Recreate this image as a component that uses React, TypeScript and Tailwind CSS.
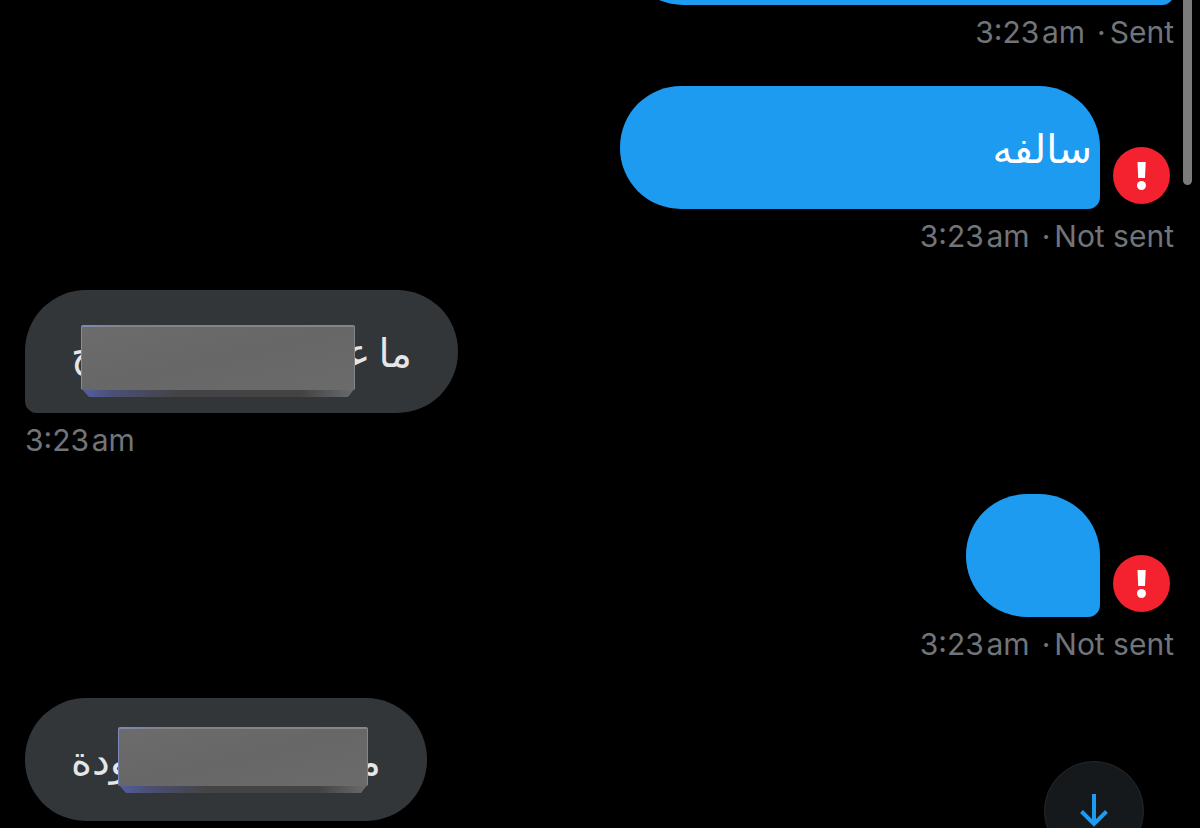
import clsx from "clsx";

type Redaction = { id: string; w: number; h: number; place: string };

type Message = {
  id: number;
  mine: boolean;
  time?: string;
  status?: string;
  failed?: boolean;
  // first and last visible parts of the text, in reading order
  parts: string[];
  size: string;
  redaction?: Redaction;
};

const messages: Message[] = [
  { id: 1, mine: true, time: "3:23", status: "Sent", parts: [], size: "w-[552px]" },
  { id: 2, mine: true, time: "3:23", status: "Not sent", failed: true, parts: ["سالفه"], size: "w-[480px] pr-2" },
  {
    id: 3, mine: false, time: "3:23", parts: ["ما\u2009ع\u200d", "ح"], size: "w-[433px] px-[46px]",
    redaction: { id: "r3", w: 274, h: 72, place: "left-14 top-[35px]" },
  },
  { id: 4, mine: true, time: "3:23", status: "Not sent", failed: true, parts: [], size: "w-[134px]" },
  {
    id: 5, mine: false, parts: ["م\u200d", "ودة"], size: "w-[402px] px-[46px]",
    redaction: { id: "r5", w: 250, h: 66, place: "left-[93px] top-[29px]" },
  },
];

export default function App() {
  return (
    <main className="relative h-screen overflow-hidden bg-black font-['Inter','Liberation_Sans',sans-serif]">
      <ol className="-mt-[118px] flex flex-col gap-9 pl-[25px] pr-[26px]">
        {messages.map((m) => <MessageRow key={m.id} m={m} />)}
      </ol>

      <div className="absolute right-2 top-0 h-[185px] w-[9px] rounded-b-full bg-[#7b7b7b]" />

      <button aria-label="Scroll to latest"
        className="absolute -bottom-[33px] right-14 flex h-[100px] w-[100px] items-center justify-center rounded-full border border-[#25282b] bg-[#16191b]">
        <svg width="30" height="36" viewBox="0 0 30 36" fill="none" stroke="#1d9bf0" strokeWidth="4">
          <path d="M15 1v30M2.500 18.500L15 31l12.500-12.500" />
        </svg>
      </button>
    </main>
  );
}

function MessageRow({ m }: { m: Message }) {
  return (
    <li className={clsx("flex flex-col", m.mine ? "items-end" : "items-start")}>
      <div className="flex items-end gap-[13px]">
        <div dir="rtl"
          className={clsx(
            "relative flex h-[123px] items-center justify-between rounded-[61px] pt-0.5 font-['DejaVu_Sans',sans-serif] text-[40px]",
            m.size,
            m.mine ? "rounded-br-[12px] bg-[#1d9bf0] text-white" : "bg-[#333639] text-[#e4e6e8]",
            !m.mine && m.time && "rounded-bl-[12px]",
          )}>
          {m.parts.map((p) => <span key={p}>{p}</span>)}
          {m.redaction && <Block r={m.redaction} />}
        </div>
        {m.failed && <FailedBadge />}
      </div>
      {m.time && (
        <p className="flex h-[45px] items-center pt-[10px] text-[30px] text-[#717478]">
          <span>{m.time}{"\u200a"}am</span>
          {m.status && <span className="ml-3">·</span>}
          {m.status && <span className="ml-1">{m.status}</span>}
        </p>
      )}
    </li>
  );
}

function FailedBadge() {
  return (
    <button aria-label="Message not sent" className="mb-[5px] mr-1 h-[57px] w-[57px]">
      <svg viewBox="0 0 57 57">
        <circle cx="28.500" cy="28.500" r="28.500" fill="#f4212e" />
        <path d="M24.500 15h8.200l-.7 16h-6.800z" fill="#fff" />
        <circle cx="28.500" cy="38.500" r="4.500" fill="#fff" />
      </svg>
    </button>
  );
}

// grey slab with a bevelled lower edge
function Block({ r: { id, w, h, place } }: { r: Redaction }) {
  const face = h - 7;
  return (
    <svg width={w} height={h} className={clsx("absolute", place)}>
      <defs>
        <linearGradient id={`${id}-face`} x1="0" y1="0" x2="1" y2="1">
          <stop offset="0" stopColor="#6c6c6d" />
          <stop offset=".5" stopColor="#676768" />
          <stop offset="1" stopColor="#6b6b6c" />
        </linearGradient>
        <linearGradient id={`${id}-base`}>
          <stop offset="0" stopColor="#5360a0" />
          <stop offset=".12" stopColor="#4b4f74" />
          <stop offset=".35" stopColor="#444446" />
          <stop offset=".8" stopColor="#434344" />
          <stop offset="1" stopColor="#6a6b6d" />
        </linearGradient>
        <linearGradient id={`${id}-rim`}>
          <stop offset="0" stopColor="#7f88bb" />
          <stop offset=".15" stopColor="#828388" />
          <stop offset="1" stopColor="#858687" />
        </linearGradient>
      </defs>
      <path d={`M0 ${face - 2}H${w}L${w - 7} ${h}H8z`} fill={`url(#${id}-base)`} />
      <rect width={w} height={face} rx="2" fill={`url(#${id}-rim)`} />
      <rect x="1" y="2" width={w - 2} height={face - 2} fill={`url(#${id}-face)`} />
    </svg>
  );
}
